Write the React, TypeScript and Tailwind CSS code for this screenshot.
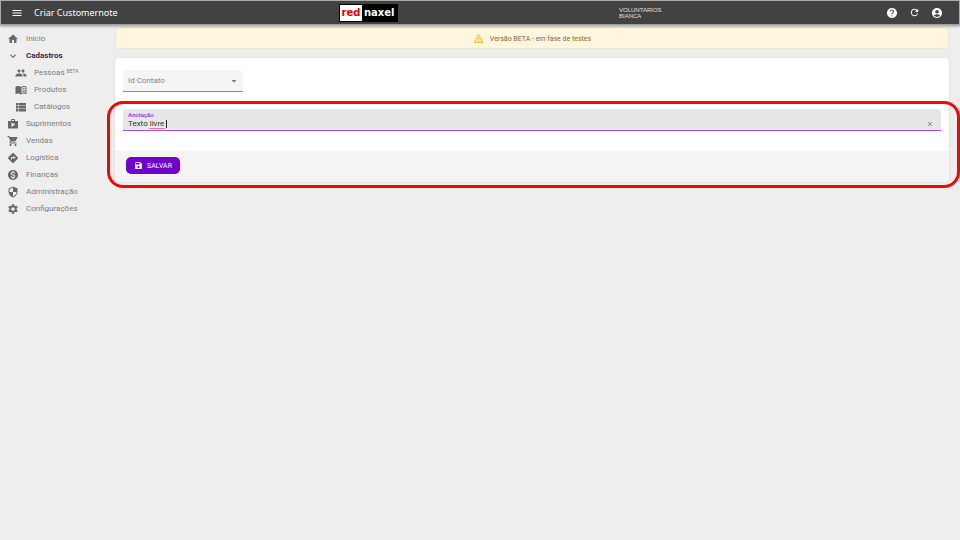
import { useState } from "react";
import type { ComponentType } from "react";
import {
  MdAccountCircle,
  MdArrowDropDown,
  MdClose,
  MdDirections,
  MdGroup,
  MdHelp,
  MdHome,
  MdKeyboardArrowDown,
  MdMenu,
  MdMonetizationOn,
  MdOutlineWarningAmber,
  MdRefresh,
  MdSave,
  MdSecurity,
  MdSettings,
  MdShop,
  MdShoppingCart
} from "react-icons/md";

type IconProps = {
  size?: number;
  className?: string;
};

type MenuItem = {
  label: string;
  icon: ComponentType<IconProps>;
  child?: boolean;
  active?: boolean;
  beta?: boolean;
};

function BookIcon({ size = 12, className }: IconProps) {
  return (
    <svg width={size} height={size} viewBox="0 0 24 24" fill="currentColor" className={className}>
      <path d="M12 6C10 4.7 8 4.2 6 4.2c-2 0-4 .5-5 1.3v14.8c1-.7 3-1.2 5-1.2s4 .6 6 1.9c2-1.3 4-1.9 6-1.9s4 .5 5 1.2V5.500c-1-.8-3-1.300-5-1.300S14 4.700 12 6zm9 11.600c-2.700-.7-5.300-.5-8 .7V7.500c2.700-1.500 5.300-1.800 8-.9v11z" />
      <path d="M14.500 9c1.700-.7 3.400-.9 5.200-.5V10c-1.800-.3-3.500-.1-5.200.6V9zm0 3c1.700-.7 3.400-.9 5.200-.5V13c-1.800-.3-3.500-.1-5.200.6V12zm0 3c1.700-.7 3.400-.9 5.200-.5V16c-1.800-.3-3.500-.1-5.200.6V15z" />
    </svg>
  );
}

function ListIcon({ size = 12, className }: IconProps) {
  return (
    <svg width={size} height={size} viewBox="0 0 24 24" fill="currentColor" className={className}>
      <path d="M2 4h4v5H2V4zm5 0h15v5H7V4zM2 10h4v5H2v-5zm5 0h15v5H7v-5zM2 16h4v5H2v-5zm5 0h15v5H7v-5z" />
    </svg>
  );
}

const menu: MenuItem[] = [
  { label: "Início", icon: MdHome },
  { label: "Cadastros", icon: MdKeyboardArrowDown, active: true },
  { label: "Pessoas", icon: MdGroup, child: true, beta: true },
  { label: "Produtos", icon: BookIcon, child: true },
  { label: "Catálogos", icon: ListIcon, child: true },
  { label: "Suprimentos", icon: MdShop },
  { label: "Vendas", icon: MdShoppingCart },
  { label: "Logística", icon: MdDirections },
  { label: "Finanças", icon: MdMonetizationOn },
  { label: "Administração", icon: MdSecurity },
  { label: "Configurações", icon: MdSettings }
];

function Header() {
  return (
    <header className="relative grid h-6 grid-cols-[338px_1fr_auto] items-center border-x border-t border-[#a9adad] bg-[#424242] pr-4 text-white shadow-[0_1px_3px_1px_rgba(0,0,0,0.4)]">
      <div className="flex items-center gap-[11px] pl-[10px]">
        <button type="button" aria-label="Menu">
          <MdMenu size={12} />
        </button>
        <h1 className="font-['Noto_Sans',sans-serif] text-[9px] leading-3">Criar Customernote</h1>
      </div>
      <div className="grid grid-cols-[280px_auto] items-center">
        <div className="flex h-[18px] w-[59px] items-center bg-black pl-px font-['DejaVu_Sans',sans-serif] text-[10px] font-bold leading-3">
          <span className="flex h-4 w-[22px] items-center justify-center bg-white text-[#f00000]">red</span>
          <span className="pl-0.5">naxel</span>
        </div>
        <p className="font-['Liberation_Sans',sans-serif] text-[6px] leading-[6px] text-[#e0e0e0]">
          VOLUNTARIOS
          <br />
          BIANCA
        </p>
      </div>
      <div className="flex items-center gap-[11px]">
        <button type="button" aria-label="Ajuda">
          <MdHelp size={12} />
        </button>
        <button type="button" aria-label="Atualizar">
          <MdRefresh size={11} />
        </button>
        <button type="button" aria-label="Conta">
          <MdAccountCircle size={12} />
        </button>
      </div>
    </header>
  );
}

function Sidebar() {
  return (
    <nav className="w-[115px] shrink-0 pt-1.5">
      <ul>
        {menu.map(({ label, icon: Icon, child, active, beta }) => (
          <li key={label}>
            <a
              href="#"
              className={`flex h-[17px] items-center gap-[7px] text-[8px] leading-3 ${
                child ? "pl-[15px]" : "pl-[7px]"
              } ${active ? "font-bold text-[#3c2a3c]" : "text-[#7d7d7d]"}`}
            >
              <Icon size={12} className="shrink-0 text-[#686868]" />
              <span>
                {label}
                {beta && <sup className="-top-0.5 pl-0.5 text-[5px]">BETA</sup>}
              </span>
            </a>
          </li>
        ))}
      </ul>
    </nav>
  );
}

export default function App() {
  const [contato, setContato] = useState("");
  const [anotacao, setAnotacao] = useState("Texto livre");

  return (
    <div className="min-h-screen bg-[#eeeeee] font-[Roboto,sans-serif]">
      <Header />
      <div className="flex">
        <Sidebar />
        <main className="min-w-0 flex-1 pt-[3px] pr-[11px]">
          <div className="flex h-[22px] items-center justify-center gap-1.5 rounded border border-[#ece6d6] bg-[#fff6e0] pt-px text-[7px] leading-3 text-[#846a35]">
            <MdOutlineWarningAmber size={11} className="text-[#fbb414]" />
            <span>Versão BETA - em fase de testes</span>
          </div>

          <form
            onSubmit={(e) => e.preventDefault()}
            className="mt-[9px] rounded bg-white shadow-[0_0_2px_rgba(0,0,0,0.15)]"
          >
            <div className="px-2 pt-3">
              <div className="relative w-[120px]">
                <select
                  id="contato"
                  value={contato}
                  onChange={(e) => setContato(e.target.value)}
                  className="block h-[22px] w-full appearance-none rounded-t border-b border-[#8c8c8c] bg-[#f5f5f5] px-[5px] text-[8px] text-[#858585]"
                >
                  <option value=""></option>
                </select>
                <label
                  htmlFor="contato"
                  className="pointer-events-none absolute top-[5px] left-[5px] text-[8px] leading-3 text-[#858585]"
                >
                  Id Contato
                </label>
                <MdArrowDropDown
                  size={12}
                  className="pointer-events-none absolute top-[5px] right-[3px] text-[#757575]"
                />
              </div>
            </div>

            <div className="relative mt-[9px] pt-2">
              <div className="px-2 pb-5">
                <div className="relative flex h-[22px] items-end rounded-t border-b border-[#a94fe0] bg-[#e7e7e7] pr-[7px] pl-[5px]">
                  <div className="flex-1">
                    <label
                      htmlFor="anotacao"
                      className="block text-[6px] font-medium leading-[7px] text-[#8a2be2]"
                    >
                      Anotação
                    </label>
                    <div className="relative">
                      <input
                        id="anotacao"
                        type="text"
                        value={anotacao}
                        onChange={(e) => setAnotacao(e.target.value)}
                        className="block h-3 w-full bg-transparent text-[8px] leading-3 text-[#333333] outline-none"
                      />
                      {/* spelling mark and text cursor */}
                      <span className="absolute top-2.5 left-[21px] h-px w-4 bg-[#e08080]" />
                      <span className="absolute top-0.5 left-[38px] h-2 w-px bg-[#222222]" />
                    </div>
                  </div>
                  <button type="button" aria-label="Limpar" onClick={() => setAnotacao("")} className="pb-0.5">
                    <MdClose size={8} className="text-[#7d7d7d]" />
                  </button>
                </div>
              </div>

              <div className="rounded-b bg-[#f4f4f4] px-[11px] pt-1.5 pb-2">
                <button
                  type="submit"
                  className="flex h-[17px] items-center gap-1 rounded-[5px] bg-[#7200ca] px-2 text-[7px] leading-3 text-white"
                >
                  <MdSave size={9} />
                  SALVAR
                </button>
              </div>

              <div className="pointer-events-none absolute top-0 -right-[11px] -bottom-1.5 -left-2 rounded-2xl border-3 border-[#ff0000]" />
            </div>
          </form>
        </main>
      </div>
    </div>
  );
}
